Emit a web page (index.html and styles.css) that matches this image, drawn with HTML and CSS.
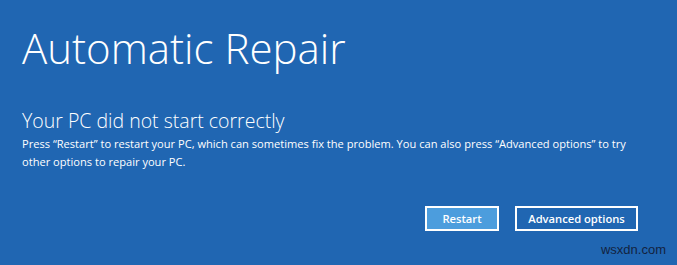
FILE: index.html
```html
<!DOCTYPE html>
<html>
<head>
<meta charset="utf-8">
<link rel="stylesheet" href="styles.css">
</head>
<body>
<main class="screen">
  <h1 class="title">Automatic Repair</h1>
  <h2 class="subtitle">Your PC did not start correctly</h2>
  <p class="message">Press “Restart” to restart your PC, which can sometimes fix the problem. You can also press “Advanced options” to try other options to repair your PC.</p>
  <div class="actions">
    <button class="btn btn-primary">Restart</button>
    <button class="btn btn-secondary">Advanced options</button>
  </div>
  <div class="watermark">wsxdn.com</div>
</main>
</body>
</html>
```
FILE: styles.css
```css
html, body {
  margin: 0;
  padding: 0;
  height: 100%;
}
body {
  background: #2066b2;
  font-family: "Open Sans", "Noto Sans", sans-serif;
  color: #ffffff;
}
.screen {
  box-sizing: border-box;
  width: 677px;
  height: 265px;
  padding: 20px 0 0 22px;
  display: flex;
  flex-direction: column;
}
.title {
  margin: 0;
  font-weight: 300;
  font-size: 42px;
  line-height: 56px;
}
.subtitle {
  margin: 33px 0 0 0;
  font-weight: 300;
  font-size: 19.5px;
  line-height: 24px;
}
.message {
  margin: 2px 0 0 0;
  font-size: 11.1px;
  line-height: 18px;
  width: 610px;
}
.actions {
  display: flex;
  gap: 16px;
  margin: 35px 0 0 403px;
}
.btn {
  box-sizing: border-box;
  height: 25px;
  padding: 0 10px;
  border: 2px solid #ffffff;
  background: transparent;
  color: #ffffff;
  font-family: "Open Sans", "Noto Sans", sans-serif;
  font-weight: 600;
  font-size: 11.2px;
}
.btn-primary {
  width: 74px;
  background: #4c9ddd;
}
.btn-secondary {
  width: 123px;
}
.watermark {
  align-self: flex-end;
  margin: 11px 11px 0 0;
  font-family: "Liberation Sans", Arial, sans-serif;
  font-size: 13px;
  line-height: 15px;
  color: #13233f;
}
```
